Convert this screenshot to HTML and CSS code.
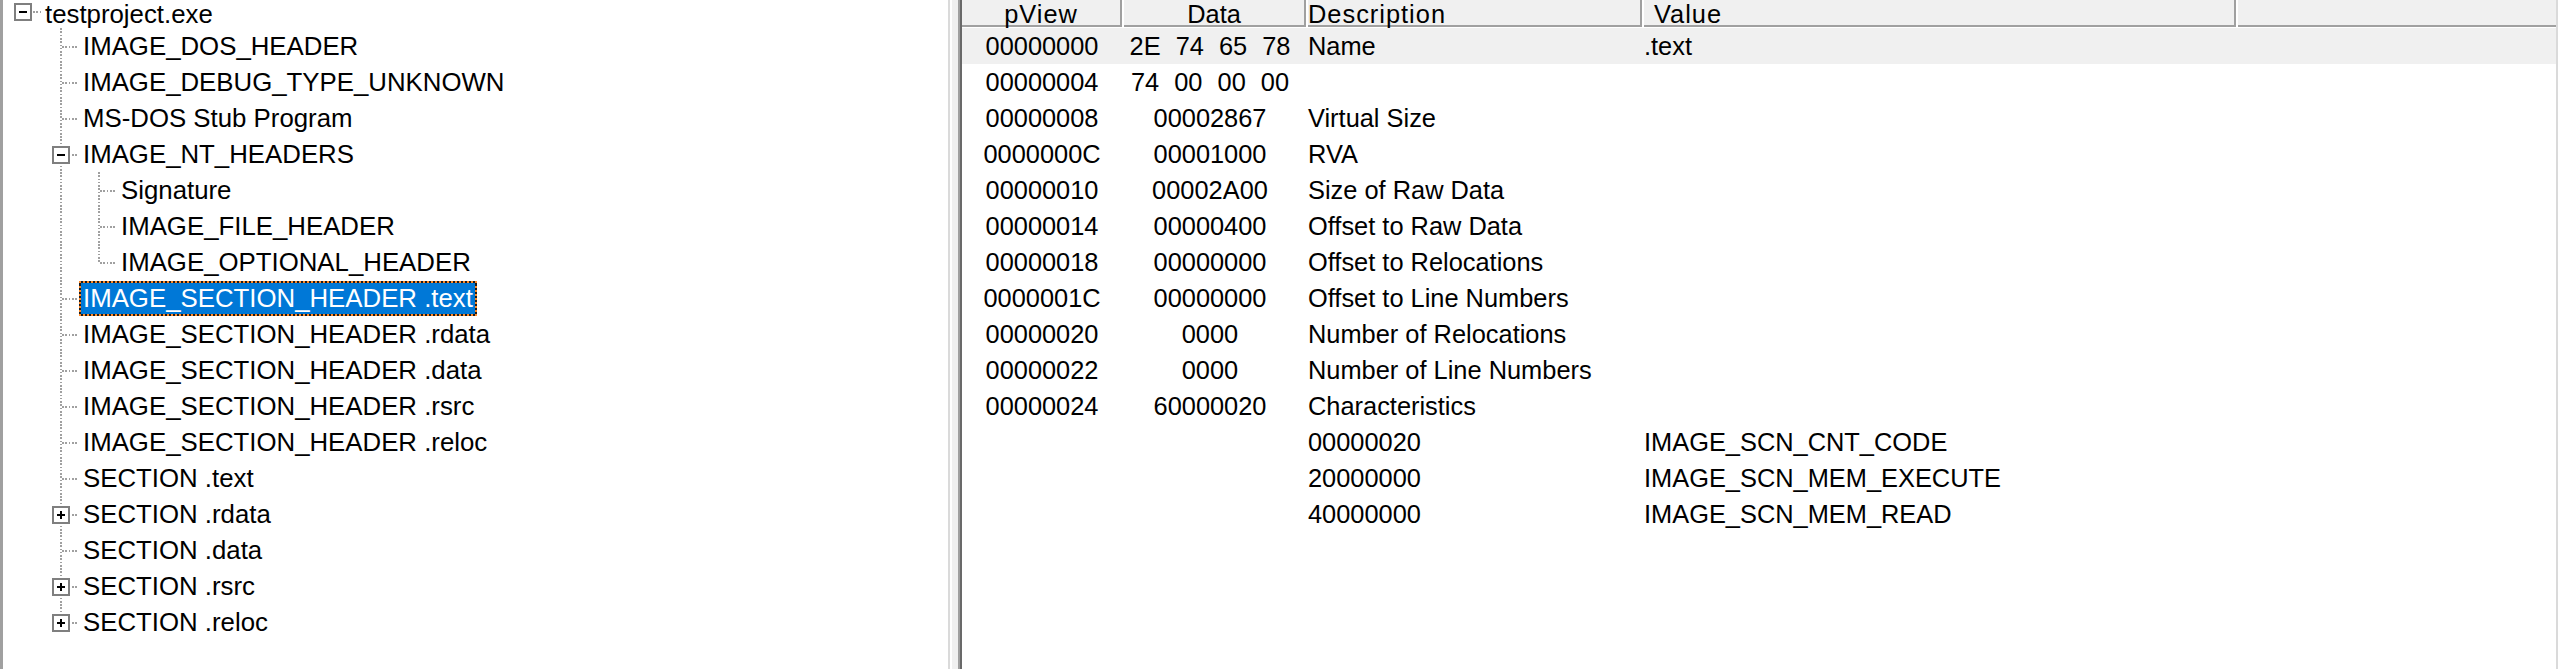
FILE: index.html
```html
<!DOCTYPE html>
<html>
<head>
<meta charset="utf-8">
<title>PEview</title>
<link rel="stylesheet" href="styles.css">
</head>
<body>
<div class="app">
  <div class="tree-pane">
    <div class="tree">
      <div class="row first"><span class="conn root"><span class="box minus"></span></span><span class="label">testproject.exe</span></div>
      <div class="row"><span class="guide"></span><span class="conn mid"></span><span class="label">IMAGE_DOS_HEADER</span></div>
      <div class="row"><span class="guide"></span><span class="conn mid"></span><span class="label">IMAGE_DEBUG_TYPE_UNKNOWN</span></div>
      <div class="row"><span class="guide"></span><span class="conn mid"></span><span class="label">MS-DOS Stub Program</span></div>
      <div class="row"><span class="guide"></span><span class="conn mid"><span class="box minus"></span></span><span class="label">IMAGE_NT_HEADERS</span></div>
      <div class="row"><span class="guide"></span><span class="guide line"></span><span class="conn mid"></span><span class="label">Signature</span></div>
      <div class="row"><span class="guide"></span><span class="guide line"></span><span class="conn mid"></span><span class="label">IMAGE_FILE_HEADER</span></div>
      <div class="row"><span class="guide"></span><span class="guide line"></span><span class="conn last"></span><span class="label">IMAGE_OPTIONAL_HEADER</span></div>
      <div class="row"><span class="guide"></span><span class="conn mid"></span><span class="label sel">IMAGE_SECTION_HEADER .text</span></div>
      <div class="row"><span class="guide"></span><span class="conn mid"></span><span class="label">IMAGE_SECTION_HEADER .rdata</span></div>
      <div class="row"><span class="guide"></span><span class="conn mid"></span><span class="label">IMAGE_SECTION_HEADER .data</span></div>
      <div class="row"><span class="guide"></span><span class="conn mid"></span><span class="label">IMAGE_SECTION_HEADER .rsrc</span></div>
      <div class="row"><span class="guide"></span><span class="conn mid"></span><span class="label">IMAGE_SECTION_HEADER .reloc</span></div>
      <div class="row"><span class="guide"></span><span class="conn mid"></span><span class="label">SECTION .text</span></div>
      <div class="row"><span class="guide"></span><span class="conn mid"><span class="box plus"></span></span><span class="label">SECTION .rdata</span></div>
      <div class="row"><span class="guide"></span><span class="conn mid"></span><span class="label">SECTION .data</span></div>
      <div class="row"><span class="guide"></span><span class="conn mid"><span class="box plus"></span></span><span class="label">SECTION .rsrc</span></div>
      <div class="row"><span class="guide"></span><span class="conn last"><span class="box plus"></span></span><span class="label">SECTION .reloc</span></div>
    </div>
  </div>
  <div class="splitter"></div>
  <div class="list-pane">
    <div class="hdr">
      <div class="hc c-view">pView</div>
      <div class="hc c-data">Data</div>
      <div class="hc c-desc">Description</div>
      <div class="hc c-val">Value</div>
      <div class="hc c-end"></div>
    </div>
    <div class="lrow hot"><span class="c-view">00000000</span><span class="c-data">2E 74 65 78</span><span class="c-desc">Name</span><span class="c-val">.text</span><span></span></div>
    <div class="lrow"><span class="c-view">00000004</span><span class="c-data">74 00 00 00</span><span class="c-desc"></span><span class="c-val"></span><span></span></div>
    <div class="lrow"><span class="c-view">00000008</span><span class="c-data">00002867</span><span class="c-desc">Virtual Size</span><span class="c-val"></span><span></span></div>
    <div class="lrow"><span class="c-view">0000000C</span><span class="c-data">00001000</span><span class="c-desc">RVA</span><span class="c-val"></span><span></span></div>
    <div class="lrow"><span class="c-view">00000010</span><span class="c-data">00002A00</span><span class="c-desc">Size of Raw Data</span><span class="c-val"></span><span></span></div>
    <div class="lrow"><span class="c-view">00000014</span><span class="c-data">00000400</span><span class="c-desc">Offset to Raw Data</span><span class="c-val"></span><span></span></div>
    <div class="lrow"><span class="c-view">00000018</span><span class="c-data">00000000</span><span class="c-desc">Offset to Relocations</span><span class="c-val"></span><span></span></div>
    <div class="lrow"><span class="c-view">0000001C</span><span class="c-data">00000000</span><span class="c-desc">Offset to Line Numbers</span><span class="c-val"></span><span></span></div>
    <div class="lrow"><span class="c-view">00000020</span><span class="c-data">0000</span><span class="c-desc">Number of Relocations</span><span class="c-val"></span><span></span></div>
    <div class="lrow"><span class="c-view">00000022</span><span class="c-data">0000</span><span class="c-desc">Number of Line Numbers</span><span class="c-val"></span><span></span></div>
    <div class="lrow"><span class="c-view">00000024</span><span class="c-data">60000020</span><span class="c-desc">Characteristics</span><span class="c-val"></span><span></span></div>
    <div class="lrow"><span class="c-view"></span><span class="c-data"></span><span class="c-desc">00000020</span><span class="c-val">IMAGE_SCN_CNT_CODE</span><span></span></div>
    <div class="lrow"><span class="c-view"></span><span class="c-data"></span><span class="c-desc">20000000</span><span class="c-val">IMAGE_SCN_MEM_EXECUTE</span><span></span></div>
    <div class="lrow"><span class="c-view"></span><span class="c-data"></span><span class="c-desc">40000000</span><span class="c-val">IMAGE_SCN_MEM_READ</span><span></span></div>
  </div>
</div>
</body>
</html>
```

FILE: styles.css
```css
html, body {
  margin: 0;
  padding: 0;
  background: #ffffff;
}

body {
  font-family: "Liberation Sans", Arial, sans-serif;
  color: #000000;
  overflow: hidden;
}

.app {
  display: flex;
  width: 2560px;
  height: 669px;
  overflow: hidden;
}

/* ---------- tree pane ---------- */
.tree-pane {
  flex: none;
  width: 945px;
  height: 669px;
  border-left: 3px solid #a0a0a0;
  border-right: 2px solid #dadada;
  background: #ffffff;
  overflow: hidden;
}

.tree {
  font-size: 25.8px;
}

.row {
  display: flex;
  height: 36px;
  align-items: stretch;
  white-space: nowrap;
}

.row.first {
  height: 28px;
}

.guide,
.conn {
  flex: none;
  width: 38px;
  height: 36px;
  display: flex;
  align-items: center;
}

.row.first .conn {
  height: 28px;
}

.guide.line {
  background: repeating-linear-gradient(to bottom, #a0a0a0 0 1.6px, transparent 1.6px 3.3px) 19px 0 / 2px 36px no-repeat;
}

.conn.mid {
  background:
    repeating-linear-gradient(to right, #a0a0a0 0 1.6px, transparent 1.6px 3.3px) 21px 18px / 17px 2px no-repeat,
    repeating-linear-gradient(to bottom, #a0a0a0 0 1.6px, transparent 1.6px 3.3px) 19px 0 / 2px 36px no-repeat;
}

.conn.last {
  background:
    repeating-linear-gradient(to right, #a0a0a0 0 1.6px, transparent 1.6px 3.3px) 21px 18px / 17px 2px no-repeat,
    repeating-linear-gradient(to bottom, #a0a0a0 0 1.6px, transparent 1.6px 3.3px) 19px 0 / 2px 19px no-repeat;
}

.conn.root {
  background: repeating-linear-gradient(to right, #a0a0a0 0 1.6px, transparent 1.6px 3.3px) 30px 11px / 8px 2px no-repeat;
}

.box {
  flex: none;
  box-sizing: border-box;
  width: 18px;
  height: 18px;
  margin-left: 11px;
  margin-top: 2px;
  border: 2px solid #7f7f7f;
  background: #ffffff;
}

.row.first .box {
  margin-top: -4px;
}

.box.minus {
  background: linear-gradient(#000, #000) center / 8px 2px no-repeat, #ffffff;
}

.box.plus {
  background:
    linear-gradient(#000, #000) center / 8px 2px no-repeat,
    linear-gradient(#000, #000) center / 2px 8px no-repeat,
    #ffffff;
}

.label {
  flex: none;
  align-self: center;
  box-sizing: border-box;
  height: 35px;
  line-height: 31px;
  padding: 0 2px;
  border: 2px solid transparent;
  margin-top: 1px;
}

.row.first .label {
  align-self: flex-start;
  height: 28px;
  line-height: 29px;
  margin-top: 0;
  border-top: 0;
  border-bottom: 0;
}

.label.sel {
  color: #ffffff;
  border: 2px dotted #ff8a28;
  background: linear-gradient(#0078d7, #0078d7) padding-box, #1c1c1c border-box;
}

/* ---------- splitter ---------- */
.splitter {
  flex: none;
  width: 10px;
  height: 669px;
  background: linear-gradient(to right, #ffffff 0 2px, #f0f0f0 2px 8px, #a0a0a0 8px 10px);
}

/* ---------- list pane ---------- */
.list-pane {
  flex: none;
  width: 1594px;
  height: 669px;
  border-left: 2px solid #696969;
  border-right: 2px solid #dadada;
  background: #ffffff;
  font-size: 25.4px;
  overflow: hidden;
}

.hdr,
.lrow {
  display: grid;
  grid-template-columns: 160px 182px 334px 592px 318px;
  column-gap: 2px;
  white-space: nowrap;
}

.hdr {
  margin-bottom: 1px;
}

.hc {
  box-sizing: border-box;
  height: 27px;
  line-height: 28.4px;
  background: #f0f0f0;
  border-right: 2px solid #a0a0a0;
  border-bottom: 2px solid #a0a0a0;
  letter-spacing: 1px;
}

.hc.c-end {
  border-right: none;
}

.hc.c-view,
.hc.c-data {
  text-align: center;
}

.hc.c-data {
  letter-spacing: 0;
}

.hc.c-val {
  padding-left: 10px;
}

.lrow {
  height: 36px;
  line-height: 36px;
}

.lrow.hot {
  background: #f0f0f0;
}

.lrow .c-view {
  text-align: center;
}

.lrow .c-data {
  text-align: center;
  padding-right: 10px;
  word-spacing: 8px;
}
```
